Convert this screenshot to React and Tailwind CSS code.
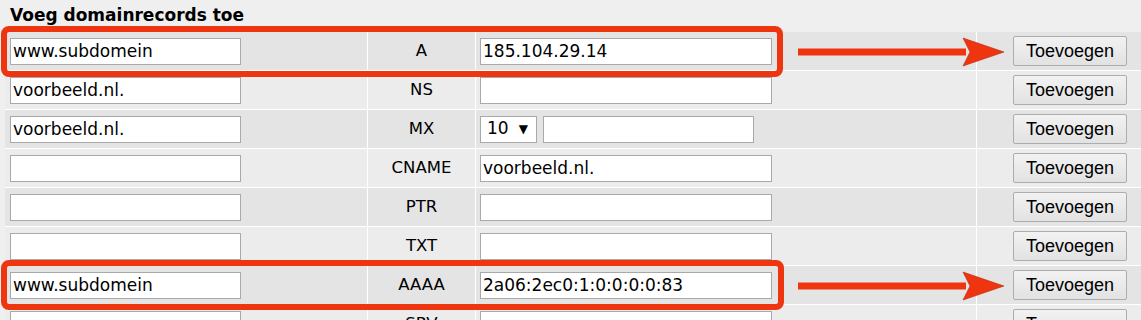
import React from 'react';

// rijen van het formulier
const records = [
  { name: 'www.subdomein', type: 'A', value: '185.104.29.14', dark: true },
  { name: 'voorbeeld.nl.', type: 'NS', value: '', dark: false },
  { name: 'voorbeeld.nl.', type: 'MX', value: '', mx: true, dark: true },
  { name: '', type: 'CNAME', value: 'voorbeeld.nl.', dark: false },
  { name: '', type: 'PTR', value: '', dark: true },
  { name: '', type: 'TXT', value: '', dark: false },
  { name: 'www.subdomein', type: 'AAAA', value: '2a06:2ec0:1:0:0:0:0:83', dark: true },
  { name: '', type: 'SRV', value: '', dark: false },
];

const Field = ({ value, className = '' }) => (
  <div
    className={`h-[27px] bg-white border border-[#a9a9a9] pl-[2px] flex items-center text-[17px] leading-none text-black whitespace-nowrap overflow-hidden ${className}`}
  >
    {value}
  </div>
);

const Row = ({ rec }) => {
  const bg = rec.dark ? 'bg-[#e4e4e4]' : 'bg-[#ececec]';
  return (
    <div className="flex gap-px h-[38px]">
      <div className={`w-[362px] ${bg} flex items-center pl-[5px]`}>
        <Field value={rec.name} className="w-[231px]" />
      </div>
      <div className={`w-[107px] ${bg} flex items-center justify-center text-[16.5px] text-black`}>
        {rec.type}
      </div>
      <div className={`w-[500px] ${bg} flex items-center pl-[4px] gap-[6px]`}>
        {rec.mx ? (
          <>
            <div className="w-[57px] h-[27px] bg-white border border-[#a9a9a9] flex items-center pl-[6px] gap-[10px] text-[17px] text-black">
              <span>10</span>
              <span className="text-[12px]">▼</span>
            </div>
            <Field value="" className="w-[211px]" />
          </>
        ) : (
          <Field value={rec.value} className="w-[292px]" />
        )}
      </div>
      <div className={`w-[200px] ${bg} flex items-center pl-[36px]`}>
        <button className="w-[114px] h-[30px] border border-[#adadad] rounded-[2px] bg-gradient-to-b from-[#f2f2f2] to-[#e2e2e2] font-['Liberation_Sans',Arial,sans-serif] text-[18px] text-black leading-none">
          Toevoegen
        </button>
      </div>
    </div>
  );
};

const Arrow = ({ y }) => (
  <svg className="absolute left-[790px]" style={{ top: y - 20 }} width="222" height="40" viewBox="0 0 222 40">
    <rect x="8" y="16.5" width="168" height="7" fill="#ee3510" />
    <polygon points="173,6 214,20 173,34 180,20" fill="#ee3510" stroke="#b52a0c" strokeWidth="0.6" />
  </svg>
);

export default function App() {
  return (
    <div className="relative w-[1141px] h-[320px] overflow-hidden bg-[#efefef] font-['DejaVu_Sans',Verdana,sans-serif]">
      <div className="h-[32px] pl-[10px] pt-[4px] text-[17px] font-bold text-black leading-[22px]">
        Voeg domainrecords toe
      </div>
      <div className="ml-[5px] flex flex-col gap-px bg-white w-[1200px]">
        {records.map((rec, i) => (
          <Row key={i} rec={rec} />
        ))}
      </div>

      {/* rode markeringen */}
      <div className="absolute left-[1px] top-[26px] w-[782px] h-[51px] border-[6px] border-[#ee3510] rounded-[8px]" />
      <div className="absolute left-[1px] top-[260px] w-[783px] h-[50px] border-[6px] border-[#ee3510] rounded-[8px]" />
      <Arrow y={52} />
      <Arrow y={286} />
    </div>
  );
}
